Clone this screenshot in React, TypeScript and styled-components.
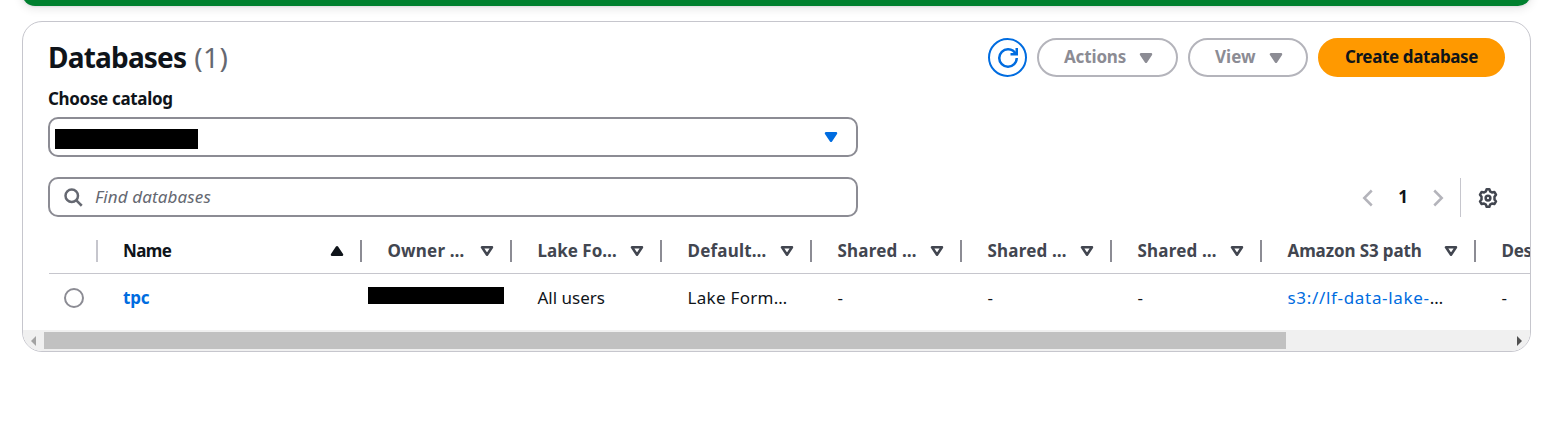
import React from 'react';
import styled, { createGlobalStyle } from 'styled-components';

const GlobalStyle = createGlobalStyle`
  * { box-sizing: border-box; }
  body {
    margin: 0;
    background: #fff;
    color: #0f141a;
    font-family: 'Noto Sans', 'Open Sans', sans-serif;
    font-size: 17px;
    line-height: 25px;
    overflow: hidden;
  }
`;

const Page = styled.main`
  display: flow-root;
  height: 425px;
  padding: 0 19px 0 22px;
  overflow: hidden;
`;

const SuccessBanner = styled.div`
  height: 26px;
  margin-top: -20px;
  border-radius: 20px;
  background: #00802f;
  box-shadow: 0 0 2px 1px #00071612, 0 2px 10px 1px #00071618;
`;

const Card = styled.section`
  display: flex;
  flex-direction: column;
  height: 331px;
  margin-top: 15px;
  border: 1px solid #c6c6cd;
  border-radius: 20px;
  background: #fff;
  overflow: hidden;
`;

const Header = styled.header`
  display: flex;
  justify-content: space-between;
  height: 55px;
  padding: 16px 25px 0;
`;

const Title = styled.h2`
  display: flex;
  gap: 8px;
  margin: 0;
  font-size: 28px;
  font-weight: 700;
  line-height: 39px;
  letter-spacing: -0.8px;
`;

const Counter = styled.span`
  color: #656871;
  font-weight: 400;
  letter-spacing: 0.4px;
`;

const ButtonRow = styled.div`
  display: flex;
  gap: 10px;
  height: 39px;
`;

const Button = styled.button<{ $width: number; $track?: number }>`
  display: flex;
  align-items: center;
  justify-content: space-between;
  width: ${(p) => p.$width}px;
  height: 39px;
  padding: 0 20px 0 25px;
  border: 2px solid #b4b4bb;
  border-radius: 20px;
  background: #fff;
  color: #8c8c94;
  font: inherit;
  font-weight: 700;
  line-height: 25px;
  letter-spacing: ${(p) => p.$track ?? 0}px;
`;

const ButtonText = styled.span`
  padding-bottom: 2px;
`;

const RefreshButton = styled(Button)`
  justify-content: center;
  padding: 0;
  border-color: #006ce0;
  color: #006ce0;
`;

const PrimaryButton = styled(Button)`
  justify-content: center;
  padding: 0;
  border-color: #ff9900;
  background: #ff9900;
  color: #0f141a;
`;

const Label = styled.label`
  padding: 9px 25px 6px;
  font-weight: 700;
  letter-spacing: -0.33px;
`;

const Field = styled.div`
  display: flex;
  align-items: center;
  width: 810px;
  height: 40px;
  border: 2px solid #8c8c94;
  border-radius: 10px;
`;

const Select = styled(Field)`
  justify-content: space-between;
  margin-left: 25px;
  padding: 0 15px 0 5px;
  color: #006ce0;
`;

const Redacted = styled.span<{ $width: number; $height: number }>`
  display: block;
  flex: none;
  width: ${(p) => p.$width}px;
  height: ${(p) => p.$height}px;
  background: #000;
`;

const SelectValue = styled(Redacted)`
  margin-top: 3px;
`;

const FilterRow = styled.div`
  display: flex;
  justify-content: space-between;
  margin-top: 20px;
  padding: 0 32px 0 25px;
`;

const SearchField = styled(Field)`
  gap: 12px;
  padding-left: 13px;
  color: #656871;
`;

const Placeholder = styled.span`
  padding-bottom: 2px;
  font-style: italic;
  letter-spacing: 0.13px;
`;

const Pagination = styled.div`
  display: flex;
  align-items: center;
  height: 39px;
  margin-top: 1px;
  color: #b4b4bb;
`;

const PageNumber = styled.span`
  width: 50px;
  padding-bottom: 2px;
  color: #0f141a;
  font-weight: 700;
  text-align: center;
`;

const Preferences = styled.div`
  display: flex;
  align-items: center;
  height: 39px;
  margin-left: 12px;
  padding: 1px 0 0 17px;
  border-left: 1px solid #c6c6cd;
  color: #424650;
`;

const TableRow = styled.div`
  display: flex;
  flex: none;
  width: 1600px;
  margin-left: 26px;
`;

const HeadRow = styled(TableRow)`
  height: 57px;
  padding-top: 12px;
  border-bottom: 1px solid #c6c6cd;
`;

const BodyRow = styled(TableRow)`
  height: 56px;
  padding-top: 11px;
`;

const HeadCell = styled.div<{ $width: number; $sorted?: boolean; $track: number }>`
  display: flex;
  flex: none;
  align-items: center;
  width: ${(p) => p.$width}px;
  height: 44px;
  padding: 0 13px 0 ${(p) => (p.$sorted ? 25 : 25.5)}px;
  color: ${(p) => (p.$sorted ? '#0f141a' : '#424650')};
  font-weight: 700;
  letter-spacing: ${(p) => p.$track}px;
  white-space: nowrap;
`;

const HeadText = styled.span`
  flex: 1;
  padding-bottom: 2px;
`;

const Divider = styled.i<{ $light?: boolean }>`
  flex: none;
  width: 2px;
  height: 22px;
  margin-top: 11px;
  background: ${(p) => (p.$light ? '#c6c6cd' : '#8c8c94')};
`;

const SelectCell = styled.div<{ $width: number }>`
  flex: none;
  width: ${(p) => p.$width}px;
  padding-left: 15px;
`;

const Radio = styled.span`
  display: block;
  width: 20px;
  height: 20px;
  margin-top: 3px;
  border: 2px solid #8c8c94;
  border-radius: 50%;
`;

const Cell = styled.div<{ $width: number; $track?: number }>`
  flex: none;
  width: ${(p) => p.$width}px;
  padding-left: 25.5px;
  letter-spacing: ${(p) => p.$track ?? 0}px;
  white-space: nowrap;
`;

const NameCell = styled(Cell)`
  padding-left: 25px;
`;

const RedactedCell = styled(Cell)`
  padding: 2px 0 0 6px;
`;

const Link = styled.a<{ $bold?: boolean }>`
  color: #006ce0;
  font-weight: ${(p) => (p.$bold ? 700 : 400)};
`;

const Scrollbar = styled.div`
  display: flex;
  flex: none;
  align-items: center;
  height: 21px;
  padding: 0 8px;
  background: #f0f0f0;
`;

const ScrollThumb = styled.div`
  width: 1242px;
  height: 17px;
  margin: 0 auto 0 8px;
  background: #c1c1c1;
`;

const ScrollArrow = styled.svg`
  display: block;
  flex: none;
  width: 5px;
  height: 10px;
`;

const Svg = styled.svg`
  display: block;
  flex: none;
  width: 20px;
  height: 20px;
  fill: none;
  stroke: currentColor;
  stroke-width: 2;
`;

const CaretDown = ({ filled }: { filled?: boolean }) => (
  <Svg viewBox="0 0 16 16" strokeLinejoin="round">
    <path d="M4 5h8l-4 6-4-6z" fill={filled ? 'currentColor' : 'none'} />
  </Svg>
);

const CaretUp = () => (
  <Svg viewBox="0 0 16 16" strokeLinejoin="round">
    <path d="M4 11h8L8 5l-4 6z" fill="currentColor" />
  </Svg>
);

const RefreshIcon = () => (
  <Svg viewBox="0 0 16 16">
    <path d="M10 5h5V0" />
    <path d="M15 8a6.957 6.957 0 0 1-7 7 6.957 6.957 0 0 1-7-7 6.957 6.957 0 0 1 7-7 6.87 6.87 0 0 1 6.3 4" />
  </Svg>
);

const SearchIcon = () => (
  <Svg viewBox="0 0 16 16">
    <circle cx="7" cy="7" r="5" />
    <path d="m15 15-4.5-4.5" />
  </Svg>
);

const AngleLeft = () => (
  <Svg viewBox="0 0 16 16">
    <path d="M11 2 5 8l6 6" />
  </Svg>
);

const AngleRight = () => (
  <Svg viewBox="0 0 16 16">
    <path d="m5 2 6 6-6 6" />
  </Svg>
);

const GearIcon = () => (
  <Svg viewBox="0 0 16 16" strokeLinejoin="round">
    <path d="M6.900 1h2.200l.6 1.700 1.500.9 1.900-.4 1.300 2.100-1.200 1.600v2.200l1.200 1.600-1.300 2.100-1.900-.4-1.500.9-.6 1.700H6.900l-.6-1.700-1.500-.9-1.900.4-1.300-2.100 1.200-1.600V6.900L1.600 5.300l1.300-2.100 1.900.4 1.500-.9z" />
    <circle cx="8" cy="8" r="1.900" />
  </Svg>
);

const columns = [
  { head: 'Owner …', width: 150, track: 0.17 },
  { head: 'Lake Fo…', width: 150, track: 0 },
  { head: 'Default…', width: 150, track: 0.2 },
  { head: 'Shared …', width: 150, track: 0.2 },
  { head: 'Shared …', width: 150, track: 0.2 },
  { head: 'Shared …', width: 150, track: 0.2 },
  { head: 'Amazon S3 path', width: 214, track: -0.12 },
];

export default function App() {
  return (
    <>
      <GlobalStyle />
      <Page>
        <SuccessBanner />
        <Card>
          <Header>
            <Title>
              Databases <Counter>(1)</Counter>
            </Title>
            <ButtonRow>
              <RefreshButton $width={39} aria-label="Refresh">
                <RefreshIcon />
              </RefreshButton>
              <Button $width={141} $track={-0.15}>
                <ButtonText>Actions</ButtonText>
                <CaretDown filled />
              </Button>
              <Button $width={120}>
                <ButtonText>View</ButtonText>
                <CaretDown filled />
              </Button>
              <PrimaryButton $width={187} $track={-0.36}>
                <ButtonText>Create database</ButtonText>
              </PrimaryButton>
            </ButtonRow>
          </Header>
          <Label>Choose catalog</Label>
          <Select>
            <SelectValue $width={143} $height={20} />
            <CaretDown filled />
          </Select>
          <FilterRow>
            <SearchField>
              <SearchIcon />
              <Placeholder>Find databases</Placeholder>
            </SearchField>
            <Pagination>
              <AngleLeft />
              <PageNumber>1</PageNumber>
              <AngleRight />
              <Preferences>
                <GearIcon />
              </Preferences>
            </Pagination>
          </FilterRow>
          <HeadRow>
            <SelectCell $width={47} />
            <Divider $light />
            <HeadCell $width={262} $sorted $track={-0.6}>
              <HeadText>Name</HeadText>
              <CaretUp />
            </HeadCell>
            {columns.map((c, i) => (
              <React.Fragment key={i}>
                <Divider />
                <HeadCell $width={c.width - 2} $track={c.track}>
                  <HeadText>{c.head}</HeadText>
                  <CaretDown />
                </HeadCell>
              </React.Fragment>
            ))}
            <Divider />
            <HeadCell $width={120} $track={-0.3}>
              <HeadText>Description</HeadText>
            </HeadCell>
          </HeadRow>
          <BodyRow>
            <SelectCell $width={49}>
              <Radio />
            </SelectCell>
            <NameCell $width={264} $track={-0.2}>
              <Link $bold>tpc</Link>
            </NameCell>
            <RedactedCell $width={150}>
              <Redacted $width={136} $height={17} />
            </RedactedCell>
            <Cell $width={150}>All users</Cell>
            <Cell $width={150} $track={0.3}>
              Lake Form…
            </Cell>
            <Cell $width={150}>-</Cell>
            <Cell $width={150}>-</Cell>
            <Cell $width={150}>-</Cell>
            <Cell $width={214} $track={0.68}>
              <Link>s3://lf-data-lake-</Link>…
            </Cell>
            <Cell $width={120}>-</Cell>
          </BodyRow>
          <Scrollbar>
            <ScrollArrow viewBox="0 0 5 10">
              <path d="M5 0v10L0 5z" fill="#a3a3a3" />
            </ScrollArrow>
            <ScrollThumb />
            <ScrollArrow viewBox="0 0 5 10">
              <path d="M0 0v10l5-5z" fill="#505050" />
            </ScrollArrow>
          </Scrollbar>
        </Card>
      </Page>
    </>
  );
}
